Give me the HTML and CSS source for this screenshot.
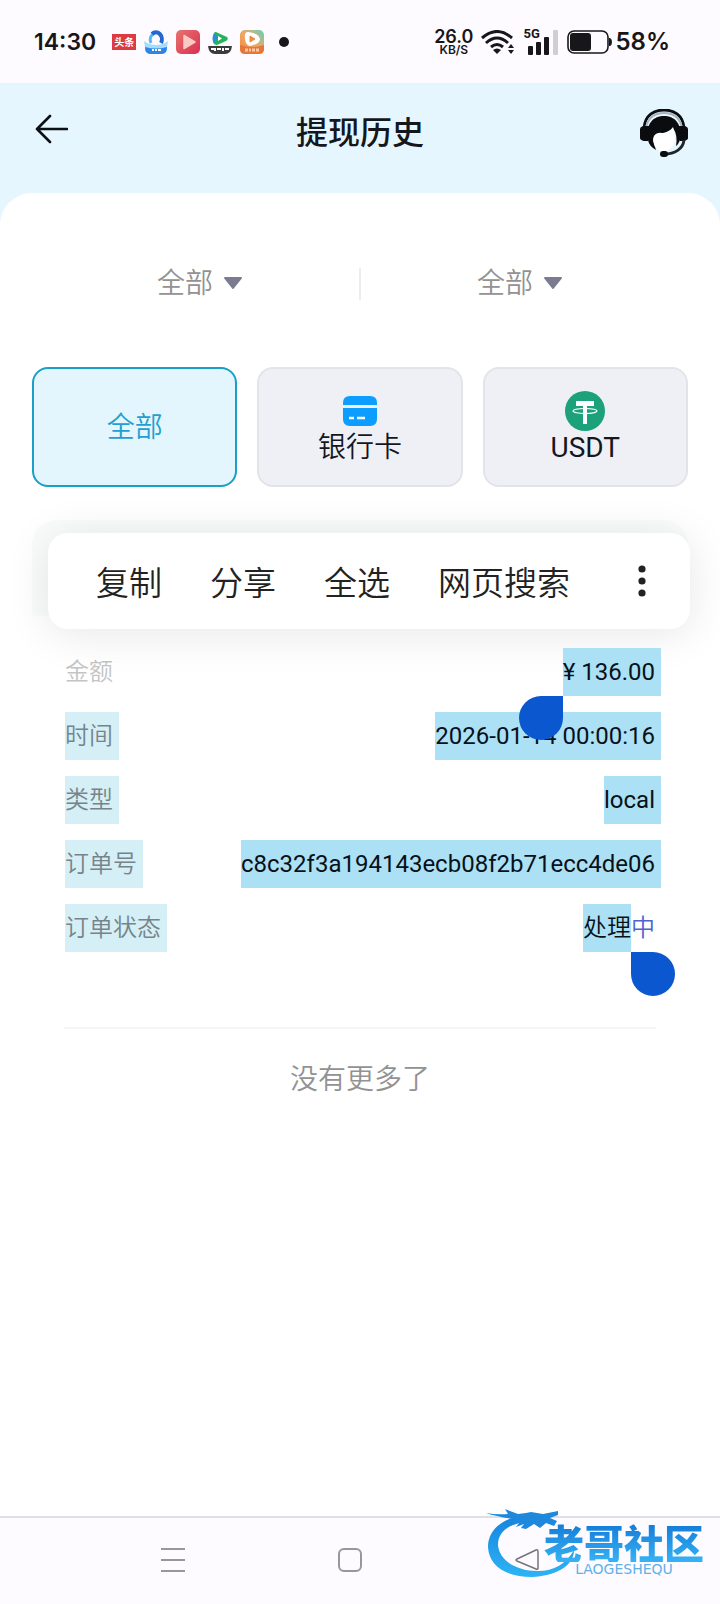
FILE: index.html
```html
<!DOCTYPE html>
<html lang="zh-CN">
<head>
  <meta charset="UTF-8">
  <meta name="viewport" content="width=device-width, initial-scale=1.0">
  <title>提现历史</title>
  <link rel="stylesheet" href="styles.css">
</head>
<body>
<div class="status-bar">
  <span class="clock">14:30</span>
  <div class="apps">
    <span class="app-toutiao">头条</span>
    <svg class="app-icon" viewBox="0 0 24 24">
      <path d="M1 14Q12 18 23 14V18Q23 24 17 24H7Q1 24 1 18Z" fill="#2b86e6"/>
      <path d="M0 11Q5 15 12 15T24 11L23 17Q12 20 1 17Z" fill="#a5dcfb"/>
      <path d="M7 13A7 7 0 0 1 11 3" fill="none" stroke="#58b6f2" stroke-width="3"/>
      <path d="M8 4A6 7 0 0 1 17 13" fill="none" stroke="#2467cf" stroke-width="4"/>
      <path d="M8 20h2m1 0h2m1 0h3" stroke="#fff" stroke-width="2"/>
    </svg>
    <svg class="app-icon" viewBox="0 0 24 24">
      <defs><linearGradient id="red" x1="0" y1="0" x2="1" y2="1"><stop offset="0" stop-color="#e8736f"/><stop offset="1" stop-color="#d9304f"/></linearGradient></defs>
      <rect width="24" height="24" rx="5" fill="url(#red)"/>
      <path d="M8 5.500L19 12L8 18.500Z" fill="#fbc9c4" stroke="#fbc9c4" stroke-width="1.500" stroke-linejoin="round"/>
    </svg>
    <svg class="app-icon" viewBox="0 0 24 24">
      <path d="M6 3Q7 1 10 3L19 7Q21 9 18 11L9 15Q6 15 5 12Z" fill="#25b35b"/>
      <path d="M6 3Q3 9 6 13L10 8Z" fill="#2a8fd8"/>
      <path d="M10 6L14 8.500L10 11Z" fill="#fff"/>
      <path d="M0 16H24Q23 24 17 24H7Q1 24 0 16Z" fill="#3b3b3b"/>
      <path d="M3 19h3m1-1v3m2-2h4m2-1v3m2-2h4" stroke="#fff" stroke-width="2"/>
    </svg>
    <svg class="app-icon" viewBox="0 0 24 24">
      <defs><linearGradient id="orange" x1="0" y1="1" x2="1" y2="0"><stop offset="0" stop-color="#f08a3c"/><stop offset=".5" stop-color="#efa765"/><stop offset="1" stop-color="#63d3b8"/></linearGradient></defs>
      <rect width="24" height="24" rx="5" fill="url(#orange)"/>
      <path d="M0 15Q12 19 24 15V19Q24 24 19 24H5Q0 24 0 19Z" fill="#e87638"/>
      <path d="M8 2Q4 2 5 9Q6 16 10 16Q20 14 20 9Q18 3 8 2Z" fill="#fff"/>
      <path d="M10 6L15 9L10 12Z" fill="#e98d43" stroke="#e98d43"/>
      <path d="M5 20h3m1 0h2m1 0h3m1 0h3" stroke="#f9c9a4" stroke-width="3"/>
    </svg>
  </div>
  <span class="dot"></span>
  <div class="signals">
    <span class="speed"><b>26.0</b><small>KB/S</small></span>
    <svg class="wifi" viewBox="0 0 34 24" width="34" height="24">
      <g fill="none" stroke="#17171a" stroke-width="3">
        <path d="M1 8Q16 -5 31 8"/>
        <path d="M5 13Q16 3 27 13"/>
        <path d="M10 17Q16 12 22 17"/>
      </g>
      <path d="M12 20Q16 17 20 20L16 24Z" fill="#17171a"/>
      <path d="M27 18L30 14L33 18ZM27 20H33L30 24Z" fill="#17171a"/>
    </svg>
    <span class="network">
      <span class="network-type">5G</span>
      <svg viewBox="0 0 36 26" width="36" height="26">
        <g fill="#17171a">
          <rect x="5" y="17" width="5" height="9" rx="1"/>
          <rect x="13" y="13" width="5" height="13" rx="1"/>
          <rect x="21" y="8" width="5" height="18" rx="1"/>
        </g>
        <rect x="30" y="1" width="5" height="25" rx="1" fill="#cfced2"/>
      </svg>
    </span>
    <svg class="battery" viewBox="0 0 46 24" width="46" height="24">
      <rect x="1" y="1" width="40" height="22" rx="6" fill="none" stroke="#17171a" stroke-width="1.600"/>
      <rect x="3" y="3" width="21" height="18" rx="3" fill="#17171a"/>
      <path d="M42 8h1q2 1 2 4t-2 4h-1z" fill="#17171a"/>
    </svg>
    <span class="battery-level">58%</span>
  </div>
</div>

<header class="header">
  <button class="icon-btn back" aria-label="返回">
    <svg viewBox="0 0 36 32" width="36" height="32"><path d="M35 16H5M18 3L5 16L18 29" fill="none" stroke="#0c0f14" stroke-width="2.600" stroke-linecap="round" stroke-linejoin="round"/></svg>
  </button>
  <h1>提现历史</h1>
  <button class="icon-btn" aria-label="客服">
    <svg viewBox="0 0 48 48" width="48" height="48">
      <path d="M4 19C5 6 14 1 24 1S43 6 44 19" fill="none" stroke="#0a0c10" stroke-width="2.800"/>
      <path d="M6 19C8 8 15 4 24 4S40 8 42 19" fill="none" stroke="#aab4bc" stroke-width="2"/>
      <path d="M3 17Q0 18 0 20V29Q0 31 4 32H8L10 17ZM45 17Q48 18 48 20V29Q48 31 44 32H40L38 17Z" fill="#0a0c10"/>
      <path d="M8 31C5 14 14 7 24 7S43 14 40 31Q38 36 36 37Q38 26 33 19Q28 24 15 26Q12 31 16 41Q9 37 8 31Z" fill="#0a0c10"/>
      <path d="M14 27Q17 23 22 24Q29 24 33 18Q35 24 35 31Q34 37 30 40Q26 44 20 42Q15 39 14 35Q12 31 14 27Z" fill="#fff"/>
      <path d="M44 31C43 40 35 45 24 45" fill="none" stroke="#20252b" stroke-width="2.800"/>
      <rect x="20" y="42" width="8" height="6" rx="3" fill="#0a0c10"/>
    </svg>
  </button>
</header>

<main class="panel">
  <div class="filters">
    <label class="filter">
      <select aria-label="类型"><option>全部</option></select>
      <svg viewBox="0 0 20 13" width="20" height="13"><path d="M2 1H18L10 11Z" fill="#7b7b91" stroke="#7b7b91" stroke-width="2" stroke-linejoin="round"/></svg>
    </label>
    <label class="filter">
      <select aria-label="状态"><option>全部</option></select>
      <svg viewBox="0 0 20 13" width="20" height="13"><path d="M2 1H18L10 11Z" fill="#7b7b91" stroke="#7b7b91" stroke-width="2" stroke-linejoin="round"/></svg>
    </label>
  </div>

  <div class="tabs">
    <button class="tab active">全部</button>
    <button class="tab">
      <svg viewBox="0 0 34 30" width="34" height="40">
        <path d="M0 9V7Q0 0 7 0H27Q34 0 34 7V9ZM0 12H34V23Q34 30 27 30H7Q0 30 0 23Z" fill="#0b9dff"/>
        <path d="M6 22H11M14 22H22" stroke="#fff" stroke-width="2.400"/>
      </svg>
      银行卡
    </button>
    <button class="tab usdt">
      <svg viewBox="0 0 40 40" width="40" height="40">
        <circle cx="20" cy="20" r="20" fill="#1ba27a"/>
        <path d="M11 10H29V15H22V33H18V15H11Z" fill="#fff"/>
        <ellipse cx="20" cy="20" rx="12" ry="2.500" fill="none" stroke="#fff" stroke-width="1.200"/>
      </svg>
      USDT
    </button>
  </div>

  <section class="record">
    <div class="record-head"></div>
    <div class="menu">
      <button>复制</button>
      <button>分享</button>
      <button>全选</button>
      <button>网页搜索</button>
      <button class="more" aria-label="更多">
        <svg viewBox="0 0 8 32" width="8" height="32" fill="#222"><circle cx="4" cy="4" r="3.600"/><circle cx="4" cy="16" r="3.600"/><circle cx="4" cy="28" r="3.600"/></svg>
      </button>
    </div>
    <dl class="rows">
      <div class="row"><dt class="muted">金额</dt><dd class="mark">¥ 136.00<i class="handle handle-start"></i></dd></div>
      <div class="row"><dt>时间</dt><dd class="mark">2026-01-14 00:00:16</dd></div>
      <div class="row"><dt>类型</dt><dd class="mark">local</dd></div>
      <div class="row"><dt>订单号</dt><dd class="mark">c8c32f3a194143ecb08f2b71ecc4de06</dd></div>
      <div class="row"><dt>订单状态</dt><dd class="status"><span class="picked">处理<i class="handle handle-end"></i></span>中</dd></div>
    </dl>
  </section>

  <p class="no-more">没有更多了</p>
</main>

<nav class="nav">
  <button aria-label="最近任务"><svg viewBox="0 0 24 24" width="24" height="24"><path d="M0 1H24M0 12H24M0 23H24" stroke="#98969b" stroke-width="2"/></svg></button>
  <button aria-label="主屏幕"><svg viewBox="0 0 24 24" width="24" height="24"><rect x="1" y="1" width="22" height="22" rx="5" fill="none" stroke="#98969b" stroke-width="2"/></svg></button>
  <button aria-label="后退"><svg viewBox="0 0 24 24" width="24" height="24"><path d="M23 4V20Q23 22 21 21L2 13Q0 12 2 11L21 2Q23 1 23 4Z" fill="none" stroke="#77757a" stroke-width="1.500"/></svg></button>
  <div class="watermark">
    <svg class="dragon" viewBox="0 0 94 72" width="94" height="72">
      <defs><linearGradient id="blue" x1="0" y1="0" x2="0" y2="1"><stop offset="0" stop-color="#1583dd"/><stop offset="1" stop-color="#2db4f5"/></linearGradient></defs>
      <path d="M38 7C14 11 2 23 2 39C3 58 20 69 46 69C68 68 88 59 88 42C80 56 68 63 52 63C28 63 13 51 12 37C12 23 24 15 44 13Z" fill="url(#blue)"/>
      <path d="M0 5Q11 7 22 6L19 1L32 6L40 5L45 4L57 6L62 5L72 3V7L64 10L71 13L68 18L60 15L54 20L48 16L40 21L35 20L38 16L30 19L33 15L24 18L28 11Q12 9 0 5Z" fill="#1e88dd"/>
    </svg>
    <span class="brand"><strong>老哥社区</strong><span>LAOGESHEQU</span></span>
  </div>
</nav>
</body>
</html>
```
FILE: styles.css
```css
* { margin: 0; padding: 0; box-sizing: border-box; }
body {
  font-family: Roboto, 'Noto Sans CJK SC', sans-serif;
  font-size: 28px;
  font-weight: 400;
  background: #fff;
  color: #14171c;
  min-height: 100vh;
  display: flex;
  flex-direction: column;
}
button, select {
  font: inherit;
  color: inherit;
  background: none;
  border: none;
  cursor: pointer;
}
svg { display: block; flex: none; }

/* status bar */
.status-bar {
  height: 83px;
  padding: 0 50px 0 34px;
  display: flex;
  align-items: center;
  background: #fdfbff;
  color: #17171a;
  font-family: Inter, Roboto, sans-serif;
  font-weight: 600;
}
.clock { font-size: 23px; }
.apps {
  display: flex;
  align-items: center;
  gap: 8px;
  margin-left: 16px;
}
.app-icon { width: 24px; height: 24px; }
.app-toutiao {
  width: 24px;
  height: 16px;
  background: #dc3b41;
  color: #fff;
  font: 700 10px/16px 'Noto Sans CJK SC', sans-serif;
  text-align: center;
}
.dot {
  width: 10px;
  height: 10px;
  margin-left: 15px;
  border-radius: 50%;
  background: #17171a;
}
.signals {
  display: flex;
  align-items: center;
  gap: 8px;
  margin-left: auto;
}
.speed {
  display: flex;
  flex-direction: column;
  align-items: center;
}
.speed b { font-size: 18px; font-weight: 600; line-height: 15px; }
.speed small { font-size: 12px; line-height: 11px; }
.network { position: relative; }
.network-type {
  position: absolute;
  top: -2px;
  left: 0;
  font: 700 13px/14px Roboto, sans-serif;
}
.battery-level { font-size: 24px; margin-left: -6px; }

/* page header */
.header {
  display: flex;
  align-items: center;
  justify-content: space-between;
  height: 142px;
  padding: 0 32px 42px;
  margin-bottom: -32px;
  background: #e6f6ff;
}
.header h1 {
  font-size: 32px;
  font-weight: 500;
  line-height: 40px;
}
.icon-btn {
  width: 48px;
  display: flex;
}
.back { padding-bottom: 8px; }

/* white panel */
.panel {
  flex: 1;
  padding-top: 64px;
  background: #fff;
  border-radius: 32px 32px 0 0;
}
.filters {
  display: flex;
  padding: 0 40px;
}
.filter {
  flex: 1;
  display: flex;
  align-items: center;
  justify-content: center;
  gap: 9px;
  height: 52px;
  color: #929292;
  font-weight: 350;
  position: relative;
}
.filter + .filter::before {
  content: '';
  position: absolute;
  left: -1px;
  top: 11px;
  width: 2px;
  height: 32px;
  background: #ededf0;
}
.filter select { appearance: none; outline: none; }
.tabs {
  display: grid;
  grid-template-columns: repeat(3, 1fr);
  gap: 20px;
  padding: 0 32px;
  margin-top: 58px;
}
.tab {
  display: flex;
  flex-direction: column;
  align-items: center;
  justify-content: center;
  height: 120px;
  padding-top: 2px;
  line-height: 34px;
  background: #eff0f6;
  border: 2px solid #e3e4ea;
  border-radius: 16px;
  font-weight: 350;
}
.tab.usdt { font-weight: 400; }
.tab.active {
  background: #e3f6fd;
  border-color: #1a9fc9;
  color: #229fd0;
}

/* record */
.record {
  position: relative;
  margin: 33px 32px 0;
}
.record-head {
  height: 96px;
  margin-bottom: 32px;
  background: #fafbfb;
  border-radius: 24px 24px 0 0;
}
.menu {
  position: absolute;
  top: 13px;
  left: 16px;
  right: -2px;
  display: flex;
  align-items: center;
  gap: 48px;
  height: 96px;
  padding: 0 44px 0 48px;
  background: #fff;
  border-radius: 20px;
  box-shadow: 0 4px 44px rgba(0, 0, 0, 0.1);
  font-size: 33px;
  font-weight: 350;
  color: #222;
  white-space: nowrap;
}
.menu .more { margin-left: auto; }
.rows {
  display: flex;
  flex-direction: column;
  gap: 16px;
  padding: 0 27px 75px 33px;
  font-size: 24px;
  line-height: 48px;
}
.row {
  display: flex;
  justify-content: space-between;
  height: 48px;
}
dt {
  padding-right: 6px;
  background: #d5eff7;
  color: #75848a;
  font-weight: 350;
}
dt.muted {
  background: none;
  color: #c4c4c4;
}
.mark {
  position: relative;
  padding-right: 6px;
  background: #ace0f4;
  color: #08111a;
}
.status { padding-right: 6px; color: #4d64d0; font-weight: 350; }
.picked {
  position: relative;
  display: inline-block;
  height: 48px;
  background: #ace0f4;
  color: #08111a;
}
.handle {
  position: absolute;
  top: 100%;
  width: 44px;
  height: 44px;
  background: #0a57d0;
  z-index: 1;
}
.handle-start {
  right: 100%;
  border-radius: 22px 0 22px 22px;
}
.handle-end {
  left: 100%;
  border-radius: 0 22px 22px 22px;
}
.no-more {
  margin: 0 64px;
  padding-top: 28px;
  border-top: 2px solid #f5f5f5;
  text-align: center;
  font-weight: 350;
  color: #929292;
}

/* system navigation */
.nav {
  position: relative;
  display: flex;
  height: 88px;
  padding: 0 104px 2px 84px;
  border-top: 2px solid #dfe0e6;
  background: #fdfbff;
}
.nav button {
  flex: 1;
  display: flex;
  align-items: center;
  justify-content: center;
}
.watermark {
  position: absolute;
  right: 16px;
  top: -10px;
  display: flex;
  pointer-events: none;
}
.brand {
  display: flex;
  flex-direction: column;
  align-items: center;
  margin: 14px 0 0 -36px;
  color: #1c8fe3;
}
.brand strong {
  font: 900 40px/40px 'Noto Sans CJK SC', sans-serif;
  color: transparent;
  background: linear-gradient(#1279d6, #37b2f5);
  background-clip: text;
}
.brand span {
  font: 400 14px/14px 'DejaVu Sans', sans-serif;
  color: #5fb0ea;
}
```
